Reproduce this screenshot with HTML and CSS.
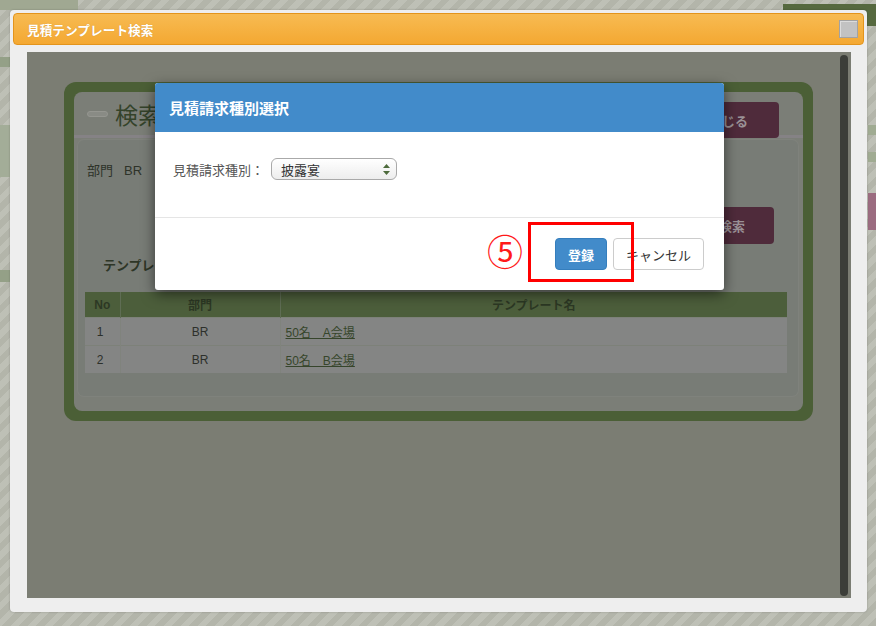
FILE: index.html
```html
<!DOCTYPE html>
<html lang="ja">
<head>
  <meta charset="UTF-8">
  <title>見積テンプレート検索</title>
  <link rel="stylesheet" href="styles.css">
</head>
<body>
  <div class="window">
    <div class="titlebar">
      <span class="titlebar-text">見積テンプレート検索</span>
      <span class="close-box"></span>
    </div>

    <div class="frame">
      <div class="frame-page">
        <div class="panel">
          <div class="card">
            <div class="card-head">
              <span class="collapse-icon"></span>
              <h2 class="card-title">検索</h2>
              <button class="btn-maroon btn-close">閉じる</button>
            </div>

            <div class="search-box">
              <div class="cond-row"><span>部門</span><span>BR</span></div>
              <div class="search-actions">
                <button class="btn-maroon btn-search">検索</button>
              </div>
              <h3 class="list-title">テンプレート一覧</h3>
              <table class="tpl-table">
                <colgroup><col class="col-no"><col class="col-dept"><col></colgroup>
                <thead>
                  <tr><th>No</th><th>部門</th><th>テンプレート名</th></tr>
                </thead>
                <tbody>
                  <tr><td class="num">1</td><td class="center">BR</td><td><a href="#">50名　A会場</a></td></tr>
                  <tr><td class="num">2</td><td class="center">BR</td><td><a href="#">50名　B会場</a></td></tr>
                </tbody>
              </table>
            </div>
          </div>
        </div>
      </div>
      <div class="scrollbar"></div>

      <!-- 種別選択ダイアログ -->
      <div class="modal">
        <div class="modal-head">見積請求種別選択</div>
        <div class="modal-body">
          <label class="field-label">見積請求種別：</label>
          <div class="select">
            <span>披露宴</span>
            <svg class="select-arrows" width="7" height="11" viewBox="0 0 7 11">
              <path d="M3.5 0 L7 4 L0 4 Z" fill="#4d6b3c"/>
              <path d="M0 7 L7 7 L3.5 11 Z" fill="#4d6b3c"/>
            </svg>
          </div>
        </div>
        <div class="modal-foot">
          <button class="btn btn-primary">登録</button>
          <button class="btn btn-default">キャンセル</button>
        </div>
      </div>
    </div>
  </div>

  <div class="mark-number">⑤</div>
  <div class="mark-box"></div>
</body>
</html>
```

FILE: styles.css
```css
html, body {
  margin: 0;
  height: 626px;
  overflow: hidden;
}
body {
  position: relative;
  box-sizing: border-box;
  padding: 10px 9px 14px 10px;
  font-family: "Liberation Sans", "Noto Sans CJK JP", sans-serif;
  background:
    linear-gradient(#56693f, #56693f) 783px 4px / 93px 22px no-repeat,
    linear-gradient(#a0a892, #a0a892) 0 0 / 78px 10px no-repeat,
    linear-gradient(#94a087, #94a087) 0 57px / 10px 10px no-repeat,
    linear-gradient(#a3ad98, #a3ad98) 0 125px / 10px 52px no-repeat,
    linear-gradient(#94a087, #94a087) 0 270px / 10px 12px no-repeat,
    linear-gradient(#a0ab92, #a0ab92) 868px 125px / 8px 10px no-repeat,
    linear-gradient(#a0ab92, #a0ab92) 868px 152px / 8px 10px no-repeat,
    linear-gradient(#9b6c80, #9b6c80) 868px 193px / 8px 37px no-repeat,
    repeating-linear-gradient(135deg, #b3b5aa 0 6px, #bec0b6 6px 12px);
}

/* ウィンドウ */
.window {
  width: 857px;
  height: 602px;
  box-sizing: border-box;
  padding: 3px;
  background: #eeeeee;
  border-radius: 4px;
  box-shadow: 0 0 2px rgba(0, 0, 0, 0.25);
  display: flex;
  flex-direction: column;
}
.titlebar {
  height: 32px;
  box-sizing: border-box;
  border: 1px solid #e3941c;
  border-radius: 4px;
  background: linear-gradient(#f7bb52, #f4a832);
  display: flex;
  align-items: center;
  padding: 0 5px 0 13px;
}
.titlebar-text {
  color: #fff;
  font-weight: bold;
  font-size: 12.7px;
  text-shadow: 0 0 1px rgba(120, 70, 0, 0.3);
}
.close-box {
  margin-left: auto;
  width: 19px;
  height: 18px;
  box-sizing: border-box;
  background: #c2c2c2;
  border: 1px solid #a2a2a2;
  box-shadow: inset 1px 1px 0 #dcdcdc;
}

.frame {
  position: relative;
  flex: 1;
  margin: 7px 13px 11px 14px;
  background: #7b7d73;
  display: flex;
  overflow: hidden;
}
.frame-page {
  flex: 1;
  padding: 30px 0 0 37px;
}
.scrollbar {
  width: 8px;
  margin: 3px 3px 2px 0;
  background: #3c3e39;
  border-radius: 4px;
}

/* 背面の検索画面（暗転表示） */
.panel {
  width: 749px;
  box-sizing: border-box;
  padding: 10px;
  background: #4b5f36;
  border-radius: 12px;
}
.card {
  background: #7b7e77;
  border-radius: 8px;
  padding-bottom: 15px;
}
.card-head {
  height: 43px;
  border-bottom: 3px solid #858285;
  display: flex;
  align-items: center;
}
.collapse-icon {
  width: 21px;
  height: 6px;
  box-sizing: border-box;
  margin-left: 13px;
  background: #898b85;
  border: 1px solid #959690;
  border-radius: 3px;
}
.card-title {
  margin: 0 0 0 7px;
  font-size: 23px;
  font-weight: normal;
  color: #34432a;
}
.btn-maroon {
  border: 0;
  border-radius: 4px;
  background: #4f2b3b;
  color: #9a9196;
  font-family: inherit;
  font-size: 13px;
  font-weight: bold;
  padding: 0;
}
.btn-close {
  align-self: flex-start;
  margin: 10px 24px 0 auto;
  width: 101px;
  height: 36px;
}
.search-box {
  margin: 2px 5px 0 4px;
  padding: 0 11px 23px 7px;
  background: #787c76;
  border-radius: 6px;
  box-shadow: 0 0 0 1px #7f827c;
}
.cond-row {
  padding: 24px 0 0 2px;
  display: flex;
  gap: 11px;
  font-size: 13px;
  line-height: 14px;
  color: #2e3329;
}
.search-actions {
  display: flex;
  justify-content: flex-end;
  margin: 29px 13px 0 0;
}
.btn-search {
  width: 84px;
  height: 37px;
}
.list-title {
  margin: 14px 0 0 18px;
  font-size: 13px;
  line-height: 16px;
  color: #2e3627;
}
.tpl-table {
  width: 702px;
  margin-top: 18px;
  border-collapse: collapse;
  font-size: 12px;
}
.col-no { width: 35px; }
.col-dept { width: 160px; }
.tpl-table th {
  height: 25px;
  padding: 0;
  background: #4c5e3b;
  color: #2c3824;
  border-left: 1px solid #5f6d54;
}
.tpl-table th:first-child { border-left: 0; }
.tpl-table td {
  height: 27px;
  padding: 0 0 0 5px;
  background: #848584;
  color: #2d302b;
  border-top: 1px solid #7d8179;
  border-left: 1px solid #80837d;
}
.tpl-table td:first-child { border-left: 0; }
.tpl-table td.num {
  text-align: right;
  padding: 0 16px 0 0;
}
.tpl-table td.center {
  text-align: center;
  padding: 0;
}
.tpl-table a {
  color: #36452b;
}

/* ダイアログ */
.modal {
  position: absolute;
  left: 128px;
  top: 31px;
  width: 569px;
  background: #fff;
  border-radius: 3px;
  overflow: hidden;
  box-shadow: 0 4px 14px rgba(0, 0, 0, 0.55);
}
.modal-head {
  height: 49px;
  background: #428bca;
  color: #fff;
  font-size: 15px;
  font-weight: bold;
  padding-left: 14px;
  display: flex;
  align-items: center;
}
.modal-body {
  padding: 26px 18px 37px;
  display: flex;
  align-items: center;
  gap: 7px;
}
.field-label {
  font-size: 13px;
  color: #555;
}
.select {
  width: 126px;
  height: 22px;
  box-sizing: border-box;
  border: 1px solid #a9a9a9;
  border-radius: 6px;
  background: linear-gradient(#ffffff, #ededed);
  padding: 0 6px 0 9px;
  display: flex;
  align-items: center;
  font-size: 13px;
  color: #333;
}
.select-arrows {
  margin-left: auto;
}
.modal-foot {
  border-top: 1px solid #e5e5e5;
  padding: 20px;
  display: flex;
  justify-content: flex-end;
  gap: 6px;
}
.btn {
  height: 32px;
  box-sizing: border-box;
  border-radius: 4px;
  font-family: inherit;
  font-size: 13px;
  padding: 0;
}
.btn-primary {
  width: 52px;
  background: #428bca;
  border: 1px solid #357ebd;
  color: #fff;
  font-weight: bold;
}
.btn-default {
  width: 91px;
  background: #fff;
  border: 1px solid #ccc;
  color: #333;
}

/* 手順の注記 */
.mark-number {
  position: absolute;
  left: 487px;
  top: 232px;
  font-family: "Noto Sans CJK JP", sans-serif;
  font-size: 36px;
  line-height: 1;
  color: #ff1a1a;
}
.mark-box {
  position: absolute;
  left: 528px;
  top: 222px;
  width: 106px;
  height: 60px;
  box-sizing: border-box;
  border: 3px solid #ff0000;
}
```
